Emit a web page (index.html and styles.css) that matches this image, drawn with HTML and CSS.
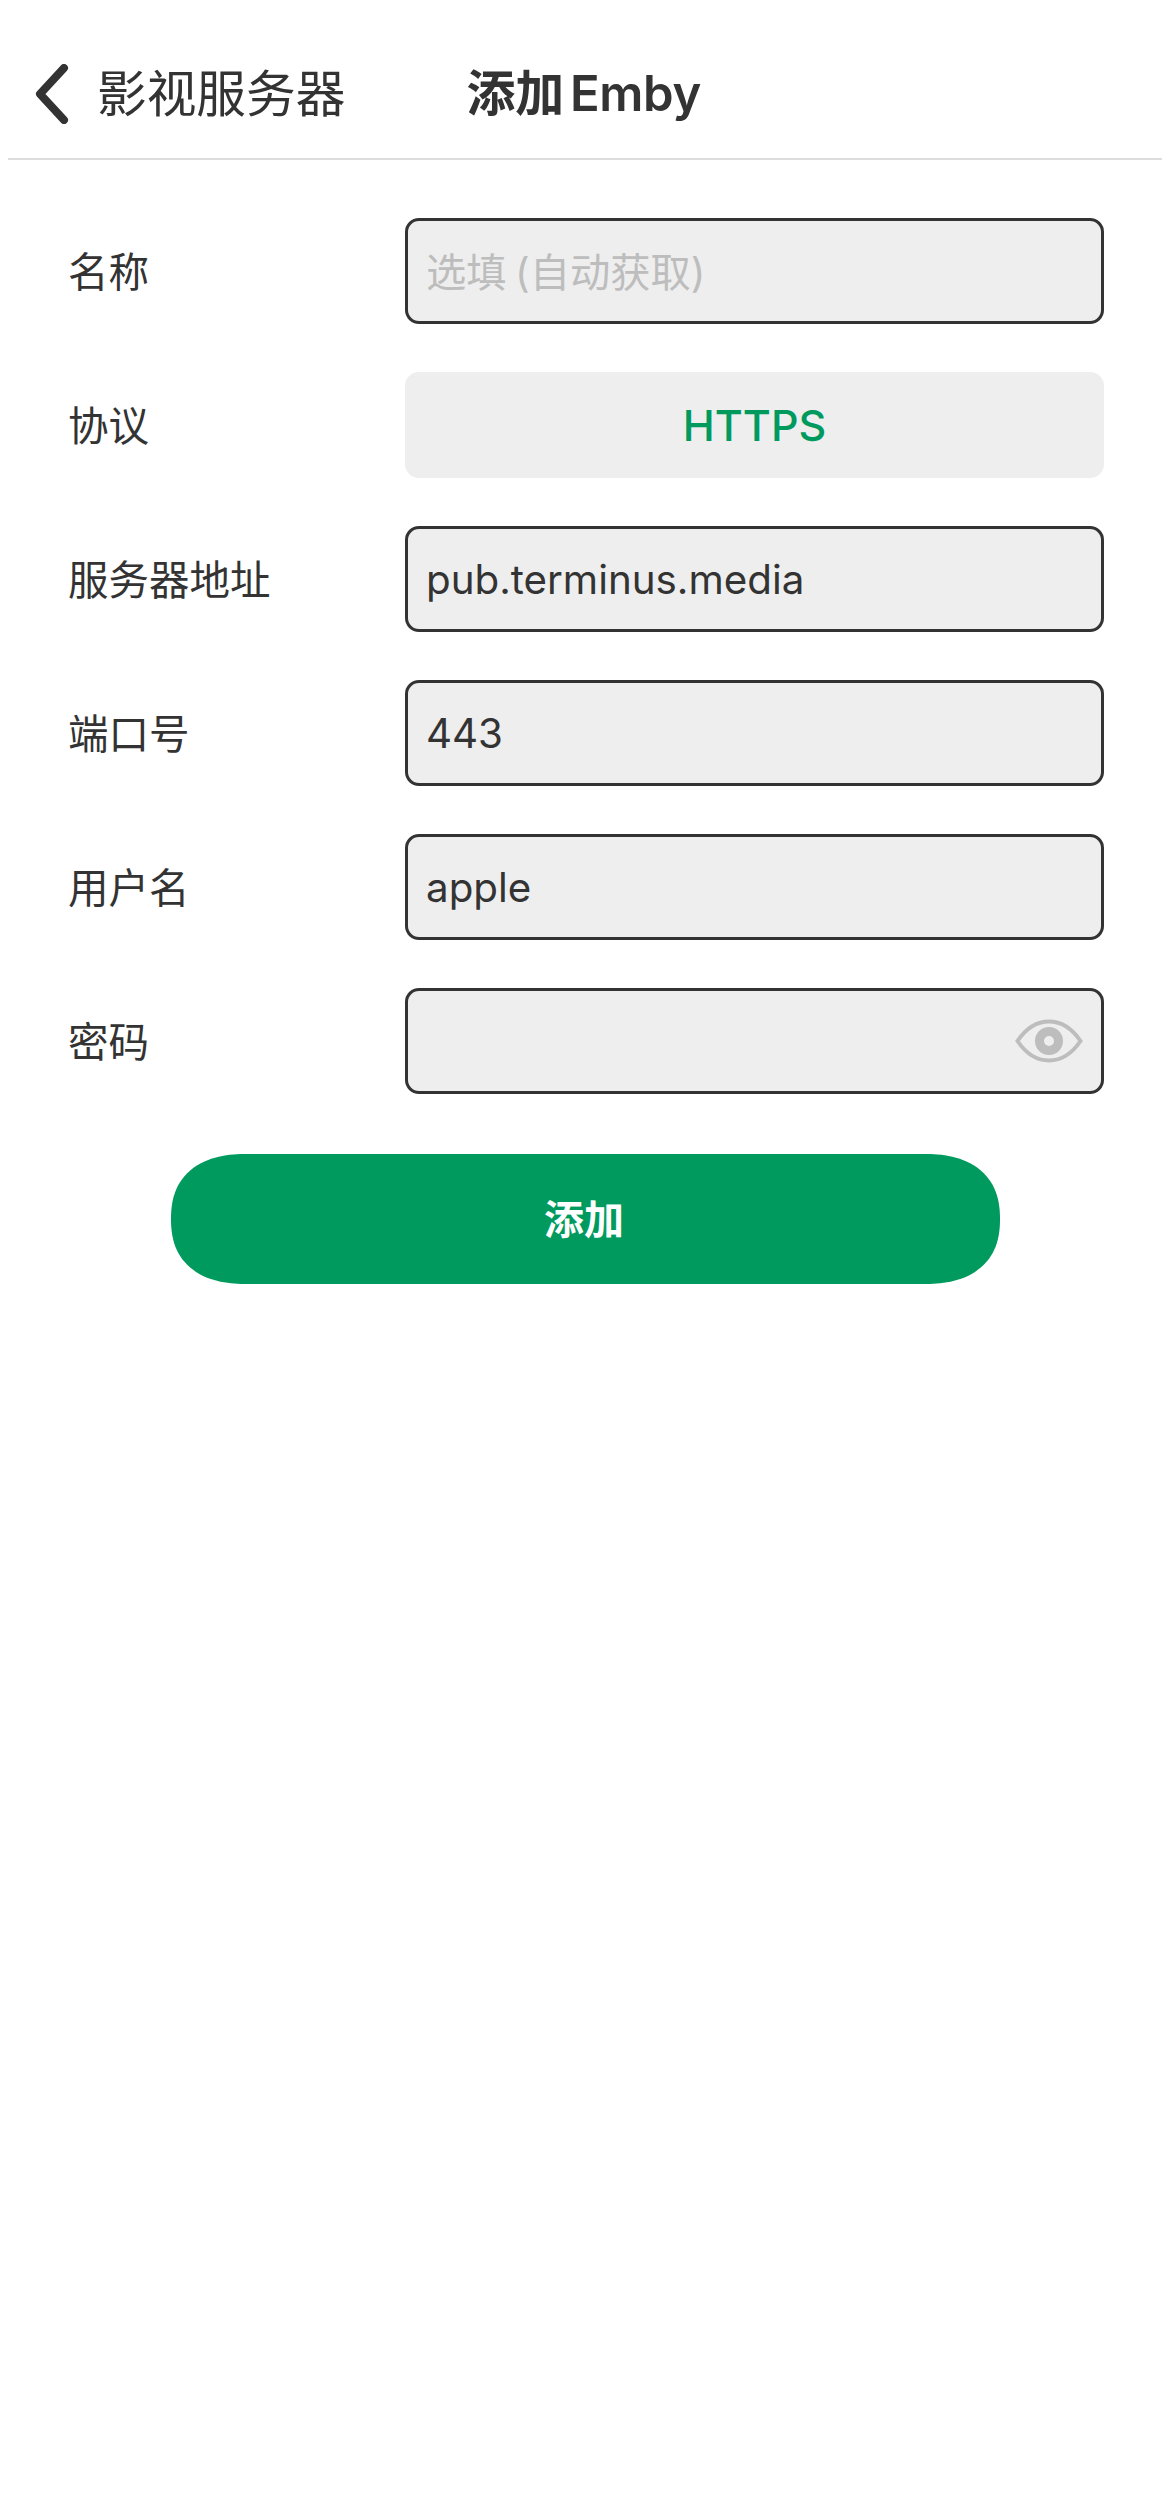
FILE: index.html
```html
<!DOCTYPE html>
<html lang="zh-CN">
<head>
<meta charset="UTF-8">
<meta name="viewport" content="width=device-width, initial-scale=1.0">
<title>添加 Emby</title>
<link rel="stylesheet" href="styles.css">
</head>
<body>
<header class="nav-bar">
  <svg class="back-icon" viewBox="0 0 36 60" width="36" height="60">
    <path d="M30 4 L6 30 L30 56" fill="none" stroke="#333" stroke-width="8" stroke-linecap="round" stroke-linejoin="round"/>
  </svg>
  <span class="back-text">影视服务器</span>
  <h1 class="nav-title">添加 Emby</h1>
</header>
<main class="form">
  <div class="form-row">
    <span class="form-label">名称</span>
    <div class="field placeholder"><span class="cjk-text">选填 (自动获取)</span></div>
  </div>
  <div class="form-row">
    <span class="form-label">协议</span>
    <div class="field field-select">HTTPS</div>
  </div>
  <div class="form-row">
    <span class="form-label">服务器地址</span>
    <div class="field">pub.terminus.media</div>
  </div>
  <div class="form-row">
    <span class="form-label">端口号</span>
    <div class="field">443</div>
  </div>
  <div class="form-row">
    <span class="form-label">用户名</span>
    <div class="field">apple</div>
  </div>
  <div class="form-row">
    <span class="form-label">密码</span>
    <div class="field field-password">
      <svg class="eye-icon" viewBox="0 0 68 44" width="68" height="44">
        <path d="M2.5 22 C12 8 23 2.5 34 2.5 C45 2.5 56 8 65.5 22 C56 36 45 41.5 34 41.5 C23 41.5 12 36 2.5 22 Z" fill="none" stroke="#bdbdbd" stroke-width="4"/>
        <circle cx="34" cy="22" r="9.5" fill="none" stroke="#bdbdbd" stroke-width="9"/>
      </svg>
    </div>
  </div>
  <button class="submit-btn">添加</button>
</main>
</body>
</html>
```

FILE: styles.css
```css
body {
  margin: 0;
  background-color: #fff;
  color: #333;
  font-family: Inter, "Noto Sans CJK SC", sans-serif;
}
.nav-bar {
  display: flex;
  align-items: center;
  box-sizing: border-box;
  height: 160px;
  margin: 0 8px;
  padding: 30px 0 0 26px;
  border-bottom: 2px solid #ddd;
}
.back-icon {
  flex: none;
}
.back-text {
  margin-left: 27px;
  font-size: 49.7px;
  line-height: 60px;
}
.nav-title {
  margin: 0 0 0 121px;
  font-size: 49px;
  font-weight: 600;
  line-height: 60px;
  word-spacing: -6px;
  letter-spacing: -0.3px;
}
.form {
  display: flex;
  flex-direction: column;
  gap: 48px;
  padding: 58px 66px 0 68px;
}
.form-row {
  display: flex;
  align-items: center;
}
.form-label {
  flex: none;
  width: 337px;
  padding-bottom: 3px;
  font-size: 40.5px;
}
.field {
  flex: 1;
  display: flex;
  align-items: center;
  box-sizing: border-box;
  height: 106px;
  padding: 0 18px;
  background-color: #eee;
  border: 3px solid #333;
  border-radius: 14px;
  font-size: 40.3px;
}
.placeholder {
  color: #bdbdbd;
}
.cjk-text {
  padding-bottom: 3px;
  word-spacing: -3px;
}
.field-select {
  justify-content: center;
  border-color: #eee;
  color: #009a5e;
  font-size: 43px;
  font-weight: 500;
}
.field-password {
  justify-content: flex-end;
  padding-right: 18px;
}
.submit-btn {
  align-self: center;
  width: 829px;
  height: 130px;
  margin: 12px 0 0 -2px;
  padding: 0 2px 4px 0;
  background-color: #009a5e;
  color: #fff;
  border: none;
  border-radius: 76px / 65px;
  corner-shape: superellipse(1.25);
  font-family: inherit;
  font-size: 40px;
  font-weight: 700;
}
```
